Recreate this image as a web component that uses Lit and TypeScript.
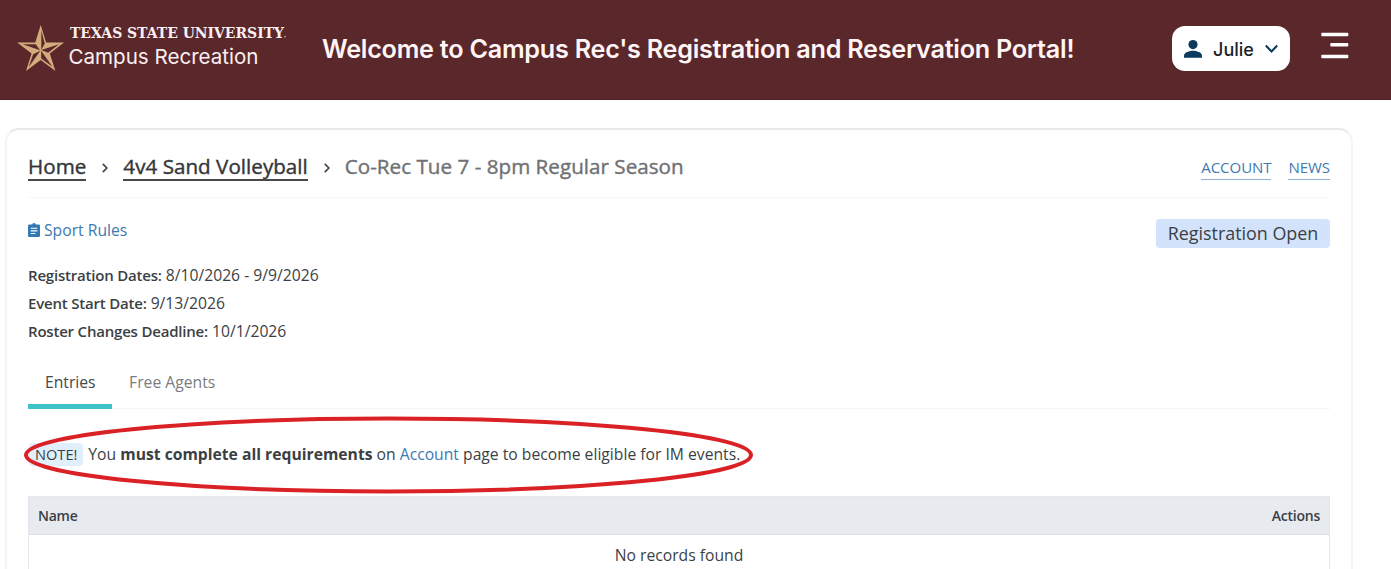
import { LitElement, html, css } from 'lit'
import { customElement, property } from 'lit/decorators.js'

@customElement('site-header')
class SiteHeader extends LitElement {
  static styles = css`
    :host {
      display: flex;
      align-items: flex-start;
      box-sizing: border-box;
      height: 100px;
      padding-left: 17px;
      background: #5a272b;
      border-bottom: 1px solid #512226;
      font-family: Inter, sans-serif;
      color: #fff;
    }

    .logo {
      display: block;
      width: 276px;
      height: 60px;
      margin-top: 20px;
    }

    .university {
      font-family: "DejaVu Serif", serif;
      font-weight: 700;
      font-size: 14px;
      fill: #fbeff0;
    }

    .department {
      font-family: Inter, sans-serif;
      font-size: 20.6px;
      fill: #fbeff0;
    }

    h1 {
      width: 752px;
      margin: 32px 0 0 29px;
      font-size: 25.2px;
      line-height: 34px;
      font-weight: 600;
      letter-spacing: -0.25px;
      white-space: nowrap;
      color: #fff5f5;
    }

    .user {
      display: flex;
      align-items: center;
      box-sizing: border-box;
      width: 118px;
      height: 45px;
      margin: 26px 0 0 98px;
      padding: 0 11px;
      border: 0;
      border-radius: 13px;
      background: #fff;
      color: #1c2227;
      font: 450 18px Inter, sans-serif;
    }

    .user span {
      width: 41px;
      margin: 1px 11px 0 10px;
    }

    .menu {
      margin: 32px 0 0 31px;
      padding: 0;
      border: 0;
      background: none;
    }

    svg {
      display: block;
      flex: none;
    }
  `

  @property() user = ''

  render () {
    return html`
      <svg class="logo" viewBox="17 20 276 60">
        <path fill="#d3ab7d" d="M40.7 25l5.4 17.6H64L49.8 53.4 55.4 71 40.7 60.1 26 71l5.6-17.6L17.2 42.6h18.1z"/>
        <!-- shaded facets, one per point -->
        <g fill="#5a272b">
          <path d="M41.3 30.5V50l3.4-6.5z"/>
          <path d="M59 44.3L41.3 50l6.8 2.8z"/>
          <path d="M52.4 66.8L41.2 50.8v7.6z"/>
          <path d="M28.8 67L40.3 50.8l-7.2 3.4z"/>
          <path d="M22.5 44.2l17.6 6-4.4-6z"/>
        </g>
        <text class="university" x="70" y="37.8" textLength="214" lengthAdjust="spacingAndGlyphs">TEXAS STATE UNIVERSITY</text>
        <circle cx="285" cy="36.7" r=".8" fill="#d9bfc0"/>
        <text class="department" x="68.5" y="64" textLength="190">Campus Recreation</text>
      </svg>
      <h1>Welcome to Campus Rec's Registration and Reservation Portal!</h1>
      <button class="user">
        <svg width="20" height="20" viewBox="0 0 20 20" fill="#0d3b5e">
          <circle cx="10" cy="5.6" r="4.6"/>
          <path d="M1 18.8v-2.3c0-3.2 5.6-4.8 9-4.8s9 1.6 9 4.8v2.3z"/>
        </svg>
        <span>${this.user}</span>
        <svg width="13" height="10" viewBox="0 0 13 10" fill="none" stroke="#0d3b5e" stroke-width="2.1">
          <path d="M.8 1.6l5.7 5.8 5.7-5.8"/>
        </svg>
      </button>
      <button class="menu" aria-label="Menu">
        <svg width="28" height="28" viewBox="0 0 28 28" fill="#fff">
          <rect x=".3" y=".7" width="27" height="3.6" rx=".8"/>
          <rect x="9.3" y="11" width="18" height="3.6" rx=".8"/>
          <rect x=".3" y="22.7" width="27" height="3.6" rx=".8"/>
        </svg>
      </button>
    `
  }
}

@customElement('event-details')
class EventDetails extends LitElement {
  static styles = css`
    :host {
      display: grid;
      grid-auto-rows: 28.2px;
      line-height: 28.2px;
      font-size: 15.7px;
    }

    b {
      font-size: 15px;
      font-weight: 600;
      letter-spacing: -0.2px;
    }
  `

  @property({ attribute: false }) items: string[][] = []

  render () {
    return this.items.map(([label, value]) => html`
      <div><b>${label}:</b> ${value}</div>
    `)
  }
}

@customElement('app-root')
class AppRoot extends LitElement {
  static styles = css`
    :host {
      display: block;
      height: 569px;
      overflow: hidden;
      background: #fff;
      font-family: "Open Sans", sans-serif;
      font-size: 15.7px;
      color: #3b3f44;
    }

    a {
      color: #4079b0;
      text-decoration: none;
    }

    main {
      box-sizing: border-box;
      width: 1348px;
      height: 460px;
      margin: 28px 0 0 5px;
      padding: 0 21px;
      border: 2px solid #f4f5f6;
      border-top: 2px solid #e9eaed;
      border-bottom: 0;
      border-radius: 14px 14px 0 0;
    }

    .bar {
      display: flex;
      justify-content: space-between;
      height: 67px;
      border-bottom: 1px solid #f6f6f7;
    }

    /* thin stroke stands in for a medium weight */
    .crumbs {
      display: flex;
      align-items: flex-start;
      padding-top: 23px;
      font-size: 20.6px;
      line-height: 26px;
      letter-spacing: 0.03px;
      -webkit-text-stroke: 0.4px currentColor;
      color: #6f7174;
      white-space: nowrap;
    }

    .crumbs a {
      border-bottom: 2px solid #46484b;
      color: #343639;
    }

    .crumbs svg {
      margin: 10px 15px 0 16px;
    }

    .links {
      display: flex;
      align-items: flex-start;
      gap: 17px;
      padding-top: 26px;
      line-height: 23px;
      font-size: 15px;
      letter-spacing: -0.05px;
    }

    .links a {
      border-bottom: 1px solid #8fb2d4;
    }

    .summary {
      display: flex;
      justify-content: space-between;
      align-items: flex-start;
      height: 63px;
    }

    .rules {
      display: flex;
      align-items: center;
      gap: 4px;
      margin-top: 21px;
      line-height: 22px;
    }

    .status {
      box-sizing: border-box;
      width: 174px;
      height: 29px;
      margin-top: 21px;
      border-radius: 4px;
      background: #d3e3fc;
      font-size: 17.9px;
      line-height: 29px;
      text-align: center;
    }

    .tabs {
      display: flex;
      height: 42px;
      margin-top: 20px;
      border-bottom: 1px solid #f4f5f6;
      line-height: 32px;
    }

    .tab {
      height: 38px;
      padding: 0 17px;
      color: #7a7d80;
    }

    .tab.active {
      padding: 0 16.5px 0 17px;
      border-bottom: 5px solid #3fc3c8;
      color: #44484c;
    }

    .note {
      display: flex;
      align-items: center;
      position: relative;
      height: 87px;
      padding: 4px 0 0 1px;
      box-sizing: border-box;
      white-space: pre;
    }

    .label {
      margin-right: 5px;
      padding: 0 6px;
      border-radius: 4px;
      background: #e1effb;
      font-size: 14.6px;
      line-height: 23px;
    }

    /* hand-drawn marker over the note */
    .ring {
      position: absolute;
      left: -4px;
      top: 7px;
      overflow: visible;
    }

    table {
      width: 100%;
      border-spacing: 0;
      border: 1px solid #e4e8ec;
    }

    th {
      height: 36px;
      padding: 1px 9px 0;
      border-bottom: 1px solid #dbe0e6;
      background: #e7eaef;
      font-size: 14px;
      letter-spacing: -0.25px;
      font-weight: 600;
      text-align: left;
    }

    th:last-child {
      text-align: right;
    }

    td {
      height: 41px;
      padding: 0;
      text-align: center;
    }
  `

  details = [
    ['Registration Dates', '8/10/2026 - 9/9/2026'],
    ['Event Start Date', '9/13/2026'],
    ['Roster Changes Deadline', '10/1/2026']
  ]

  chevron () {
    return html`
      <svg width="6" height="10" viewBox="0 0 6 10" fill="none" stroke="#46484b" stroke-width="1.7">
        <path d="M.8 .8L4.8 5l-4 4.2"/>
      </svg>
    `
  }

  render () {
    return html`
      <site-header user="Julie"></site-header>
      <main>
        <div class="bar">
          <nav class="crumbs">
            <a>Home</a>${this.chevron()}<a>4v4 Sand Volleyball</a>${this.chevron()}<span>Co-Rec Tue 7 - 8pm Regular Season</span>
          </nav>
          <nav class="links"><a>ACCOUNT</a><a>NEWS</a></nav>
        </div>
        <div class="summary">
          <a class="rules">
            <svg width="12" height="14" viewBox="0 0 12 14">
              <rect y="1.5" width="12" height="12.5" rx="1.3" fill="#3277b6"/>
              <circle cx="6" cy="1.9" r="1.8" fill="#3277b6"/>
              <path stroke="#fff" stroke-width="1.1" d="M2.7 5.3h6.6M2.7 7.9h6.6M2.7 10.5h4.6"/>
            </svg>
            <span>Sport Rules</span>
          </a>
          <div class="status">Registration Open</div>
        </div>
        <event-details .items=${this.details}></event-details>
        <div class="tabs">
          <div class="tab active">Entries</div>
          <div class="tab">Free Agents</div>
        </div>
        <div class="note"><span class="label">NOTE!</span><span>You <b>must complete all requirements</b> on <a>Account</a> page to become eligible for IM events.</span><svg class="ring" width="728" height="78" viewBox="0 0 728 78" fill="none" stroke="#d92126" stroke-width="4">
            <ellipse cx="364.5" cy="39" rx="362.5" ry="36.5"/>
          </svg></div>
        <table>
          <tr><th>Name</th><th>Actions</th></tr>
          <tr><td colspan="2">No records found</td></tr>
        </table>
      </main>
    `
  }
}
